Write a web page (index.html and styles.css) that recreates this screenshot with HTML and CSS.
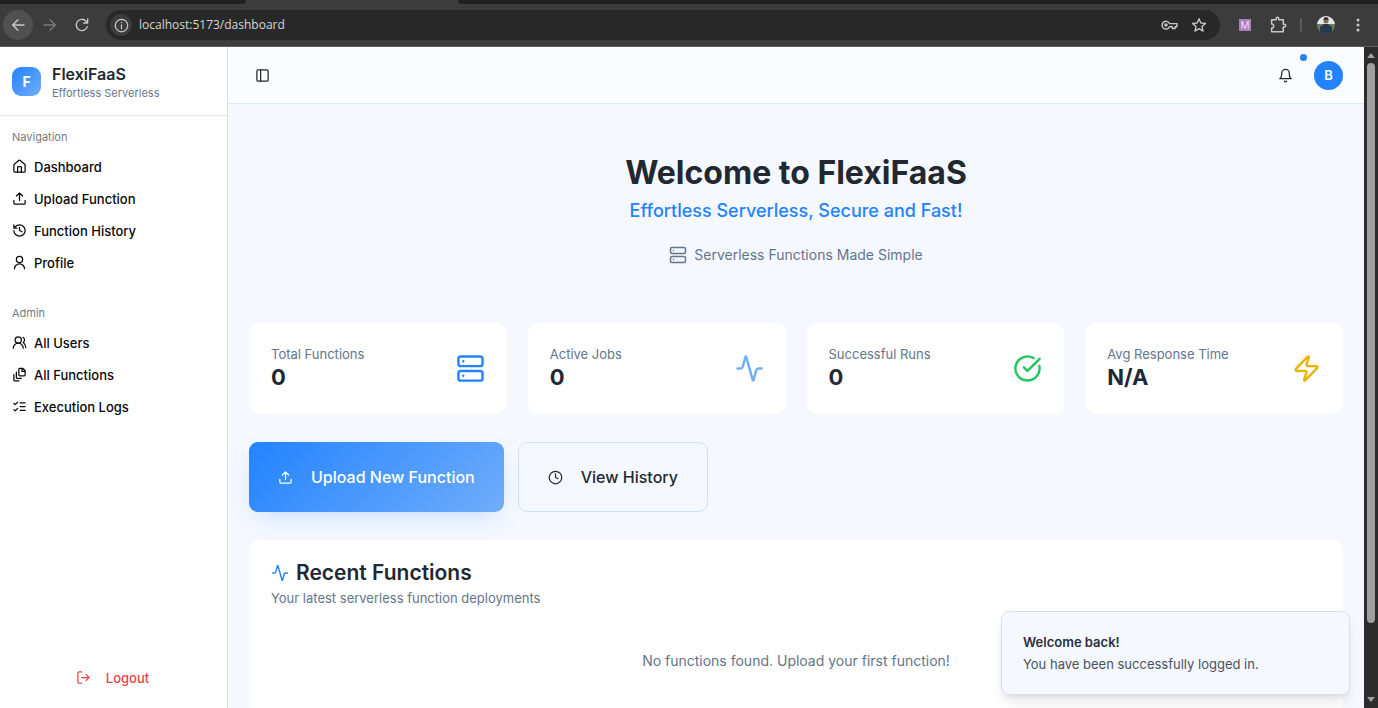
FILE: index.html
```html
<!DOCTYPE html>
<html lang="en">
<head>
<meta charset="utf-8">
<title>FlexiFaaS</title>
<link rel="stylesheet" href="styles.css">
</head>
<body>
<svg class="defs" aria-hidden="true">
  <symbol id="server" viewBox="0 0 24 24"><rect x="2" y="2" width="20" height="8" rx="2"/><rect x="2" y="14" width="20" height="8" rx="2"/><path d="M6 6h.01M6 18h.01"/></symbol>
  <symbol id="upload" viewBox="0 0 24 24"><path d="M21 15v4a2 2 0 0 1-2 2H5a2 2 0 0 1-2-2v-4M17 8l-5-5-5 5M12 3v12"/></symbol>
  <symbol id="activity" viewBox="0 0 24 24"><path d="M22 12h-2.48a2 2 0 0 0-1.93 1.46l-2.35 8.36a.25.25 0 0 1-.48 0L9.24 2.18a.25.25 0 0 0-.48 0l-2.35 8.36A2 2 0 0 1 4.49 12H2"/></symbol>
</svg>
<div class="window">
  <header class="browser">
    <div class="tabstrip"><span class="tab-left"></span><span class="tab-active"></span><span class="tab-rest"></span></div>
    <div class="toolbar">
      <button class="round lit" aria-label="Back"><svg class="icon i16" viewBox="0 0 24 24"><path d="M21 12H4M12 4l-8 8 8 8"/></svg></button>
      <button class="round dim" aria-label="Forward"><svg class="icon i16" viewBox="0 0 24 24"><path d="M3 12h17M12 4l8 8-8 8"/></svg></button>
      <button class="round" aria-label="Reload"><svg class="icon i16" viewBox="0 0 24 24"><path d="M20 14.5A8.500 8.500 0 1 1 18 6l2.500 2.500M20.500 3v6h-6"/></svg></button>
      <div class="address">
        <button class="site" aria-label="Site information"><svg class="icon i14" viewBox="0 0 24 24"><circle cx="12" cy="12" r="10"/><path d="M12 11v6M12 7v.5"/></svg></button>
        <input class="url" aria-label="Address" value="localhost:5173/dashboard">
        <button class="plain" aria-label="Passwords"><svg class="icon key" viewBox="0 0 24 14"><path d="M12 5a5.500 5.500 0 1 0 0 4.500h4V12h4V9.500h2.500V5z"/><circle cx="7" cy="7" r="1.500"/></svg></button>
        <button class="plain" aria-label="Bookmark"><svg class="icon i16" viewBox="0 0 24 24"><path d="m12 2.500 2.700 6.500 7.100.6-5.400 4.700 1.700 6.900-6.100-3.700-6.100 3.700 1.700-6.900L2.200 9.600l7.100-.6z"/></svg></button>
      </div>
      <button class="ext" aria-label="Extension">M</button>
      <button class="plain" aria-label="Extensions"><svg class="icon i18" viewBox="0 0 24 24"><path d="M3.500 5h6V3.500a1.500 1.500 0 0 1 3.500 0V5h6v6h1.500a1.500 1.500 0 0 1 0 3.500H19v6.500H3.500v-5a2.700 2.700 0 0 0 0-5.500z"/></svg></button>
      <span class="divider"></span>
      <button class="plain" aria-label="Account"><svg class="photo" viewBox="0 0 18 18"><clipPath id="round"><circle cx="9" cy="9" r="9"/></clipPath><g clip-path="url(#round)"><path fill="#e3e7ea" d="M0 0h18v9H0z"/><path fill="#6f7d58" d="M0 8h18v10H0z"/><path fill="#26384e" d="M3 18v-7l4-3h4l4 3v7z"/><circle cx="9" cy="5" r="2.500" fill="#8b6858"/><path fill="#202020" d="M6.500 4.500V2.500Q9 0 11.500 2.500v2L11 3.500H7z"/></g></svg></button>
      <button class="plain" aria-label="Menu"><svg class="dots" viewBox="0 0 4 14"><circle cx="2" cy="2" r="1.500"/><circle cx="2" cy="7" r="1.500"/><circle cx="2" cy="12" r="1.500"/></svg></button>
    </div>
  </header>
  <div class="page">
    <aside class="sidebar">
      <div class="brand"><span class="logo">F</span><div><div class="brand-name">FlexiFaaS</div><div class="brand-sub">Effortless Serverless</div></div></div>
      <nav class="group">
        <h2 class="label">Navigation</h2>
        <a class="item" href="#"><svg class="icon i14" viewBox="0 0 24 24"><path d="M15 21v-8a1 1 0 0 0-1-1h-4a1 1 0 0 0-1 1v8"/><path d="M3 10a2 2 0 0 1 .709-1.528l7-5.999a2 2 0 0 1 2.582 0l7 5.999A2 2 0 0 1 21 10v9a2 2 0 0 1-2 2H5a2 2 0 0 1-2-2z"/></svg>Dashboard</a>
        <a class="item" href="#"><svg class="icon i14"><use href="#upload"/></svg>Upload Function</a>
        <a class="item" href="#"><svg class="icon i14" viewBox="0 0 24 24"><path d="M3 12a9 9 0 1 0 9-9 9.750 9.750 0 0 0-6.740 2.740L3 8M3 3v5h5M12 7v5l4 2"/></svg>Function History</a>
        <a class="item" href="#"><svg class="icon i14" viewBox="0 0 24 24"><circle cx="12" cy="7" r="5"/><path d="M20 22a8 8 0 0 0-16 0"/></svg>Profile</a>
      </nav>
      <nav class="group">
        <h2 class="label">Admin</h2>
        <a class="item" href="#"><svg class="icon i14" viewBox="0 0 24 24"><path d="M18 21a8 8 0 0 0-16 0"/><circle cx="10" cy="8" r="5"/><path d="M22 20c0-3.370-2-6.500-4-8a5 5 0 0 0-.450-8.300"/></svg>All Users</a>
        <a class="item" href="#"><svg class="icon i14" viewBox="0 0 24 24"><path d="M16 2v5h5M21 6v6.500c0 .8-.7 1.500-1.500 1.500h-7c-.8 0-1.500-.7-1.500-1.500v-9c0-.8.7-1.500 1.500-1.500H17l4 4zM7 8v8.800c0 .3.2.6.4.8.2.2.5.4.8.4H15M3 12v8.800c0 .3.2.6.4.8.2.2.5.4.8.4H11"/></svg>All Functions</a>
        <a class="item" href="#"><svg class="icon i14" viewBox="0 0 24 24"><path d="m3 17 2 2 4-4M3 7l2 2 4-4M13 6h8M13 12h8M13 18h8"/></svg>Execution Logs</a>
      </nav>
      <button class="logout"><svg class="icon i14" viewBox="0 0 24 24"><path d="M9 21H5a2 2 0 0 1-2-2V5a2 2 0 0 1 2-2h4M16 17l5-5-5-5M21 12H9"/></svg>Logout</button>
    </aside>
    <div class="content">
      <div class="topbar">
        <button class="plain" aria-label="Toggle sidebar"><svg class="icon i14" viewBox="0 0 24 24"><rect x="3" y="3" width="18" height="18" rx="2"/><path d="M9 3v18"/></svg></button>
        <div class="account">
          <button class="bell" aria-label="Notifications"><svg class="icon i14" viewBox="0 0 24 24"><path d="M6 8a6 6 0 0 1 12 0c0 7 3 9 3 9H3s3-2 3-9M10.300 21a1.940 1.940 0 0 0 3.400 0"/></svg><span class="dot"></span></button>
          <button class="avatar" aria-label="Profile menu">B</button>
        </div>
      </div>
      <main class="main">
        <section class="hero">
          <h1 class="title">Welcome to FlexiFaaS</h1>
          <p class="tagline">Effortless Serverless, Secure and Fast!</p>
          <p class="simple"><svg class="icon i18"><use href="#server"/></svg>Serverless Functions Made Simple</p>
        </section>
        <section class="stats">
          <div class="card stat"><div><div class="stat-label">Total Functions</div><div class="stat-value">0</div></div><svg class="icon i28 blue"><use href="#server"/></svg></div>
          <div class="card stat"><div><div class="stat-label">Active Jobs</div><div class="stat-value">0</div></div><svg class="icon i28 sky"><use href="#activity"/></svg></div>
          <div class="card stat"><div><div class="stat-label">Successful Runs</div><div class="stat-value">0</div></div><svg class="icon i28 green" viewBox="0 0 24 24"><path d="M21.801 10A10 10 0 1 1 17 3.335M9 11l3 3L22 4"/></svg></div>
          <div class="card stat"><div><div class="stat-label">Avg Response Time</div><div class="stat-value">N/A</div></div><svg class="icon i28 amber" viewBox="0 0 24 24"><path d="M4 14a1 1 0 0 1-.780-1.630l9.900-10.200a.5.5 0 0 1 .860.460l-1.920 6.020A1 1 0 0 0 13 10h7a1 1 0 0 1 .780 1.630l-9.900 10.200a.5.5 0 0 1-.860-.460l1.920-6.020A1 1 0 0 0 11 14z"/></svg></div>
        </section>
        <section class="actions">
          <button class="action primary"><svg class="icon i14"><use href="#upload"/></svg>Upload New Function</button>
          <button class="action outline"><svg class="icon i14" viewBox="0 0 24 24"><circle cx="12" cy="12" r="10"/><path d="M12 6v6l4 2"/></svg>View History</button>
        </section>
        <section class="card recent">
          <h2 class="recent-title"><svg class="icon i18 blue"><use href="#activity"/></svg>Recent Functions</h2>
          <p class="recent-sub">Your latest serverless function deployments</p>
          <p class="empty">No functions found. Upload your first function!</p>
        </section>
      </main>
    </div>
    <div class="scrollbar"><span class="arrow up"></span><span class="thumb"></span><span class="arrow down"></span></div>
  </div>
  <div class="toast" role="status"><strong class="toast-title">Welcome back!</strong><span>You have been successfully logged in.</span></div>
</div>
</body>
</html>
```
FILE: styles.css
```css
* { box-sizing: border-box; }
body { margin: 0; font-family: Inter, sans-serif; color: #212830; }
h1, h2, p { margin: 0; }
button { border: 0; padding: 0; background: none; color: inherit; font: inherit; display: flex; align-items: center; justify-content: center; }
a { color: inherit; text-decoration: none; }
.defs { position: absolute; width: 0; height: 0; }
.icon { flex: none; fill: none; stroke: currentColor; stroke-width: 2; stroke-linecap: round; stroke-linejoin: round; }
.i14 { width: 15px; height: 15px; }
.i16 { width: 16px; height: 16px; }
.i18 { width: 18px; height: 18px; }
.i28 { width: 29px; height: 29px; }
.blue { color: #2383ff; }
.sky { color: #70adfa; }
.green { color: #22c55e; }
.amber { color: #eab308; }

.window { position: relative; height: 100vh; display: flex; flex-direction: column; overflow: hidden; }

.browser { background: #3c3c3c; border-bottom: 1px solid #5c5f5e; color: #c7c7c7; }
.tabstrip { display: flex; height: 4px; background: #3c3c3c; }
.tab-left { width: 246px; background: #1f2020; border-bottom-right-radius: 4px; }
.tab-active { width: 212px; }
.tab-rest { flex: 1; background: #1f2020; border-bottom-left-radius: 4px; }
.toolbar { display: flex; align-items: center; height: 42px; padding: 0 18px 0 3px; }
.round { width: 30px; height: 30px; border-radius: 50%; margin-right: 2px; }
.lit { background: #505050; }
.dim { color: #7b7b7b; }
.address { flex: 1; display: flex; align-items: center; gap: 13px; height: 30px; margin: 0 19px 0 7px; padding: 0 13px 0 4px; border-radius: 15px; background: #282828; }
.site { width: 22px; height: 22px; border-radius: 50%; background: #3c3c3c; }
.url { flex: 1; min-width: 0; margin-left: -6px; padding: 0; border: 0; outline: 0; background: none; color: #d6d6d6; font: 12px/20px "Open Sans", sans-serif; }
.key { width: 17px; height: 10px; }
.ext { width: 12px; height: 12px; background: #a97fc0; color: #eadff0; font-size: 10px; line-height: 12px; margin-right: 18px; }
.divider { width: 2px; height: 14px; margin: 0 15px 0 13px; background: #5b5b5b; }
.photo { width: 18px; height: 18px; margin-right: 21px; }
.dots { width: 4px; height: 14px; fill: #c7c7c7; }

.page { flex: 1; min-height: 0; display: flex; }
.sidebar { flex: none; width: 228px; display: flex; flex-direction: column; border-right: 1px solid #d7dfed; background: #fff; }
.brand { display: flex; align-items: center; gap: 11px; height: 69px; padding: 0 12px; border-bottom: 1px solid #dfe3ea; }
.logo { display: flex; align-items: center; justify-content: center; width: 29px; height: 29px; border-radius: 9px; background: linear-gradient(135deg, #2383ff, #70adfa); color: #fff; font-size: 14px; font-weight: 700; }
.brand-name { padding-top: 2px; font-size: 16px; line-height: 22px; font-weight: 600; }
.brand-sub { font-size: 11px; line-height: 16px; color: #65758b; }
.group { padding: 7px 7px 6px; margin-bottom: 6px; }
.label { height: 29px; padding: 0 5px; font-size: 11px; line-height: 29px; font-weight: 400; color: #777b81; }
.item { display: flex; align-items: center; gap: 7px; height: 29px; margin-bottom: 3px; padding: 0 5px; color: #09090b; font-size: 13px; font-weight: 500; }
.logout { gap: 15px; margin: auto 0 16px; height: 29px; padding-right: 2px; color: #ef4444; font-size: 13px; font-weight: 500; }

.content { flex: 1; min-width: 0; display: flex; flex-direction: column; background: #f5f8ff; }
.topbar { flex: none; display: flex; align-items: center; justify-content: space-between; height: 57px; padding: 0 21px 0 27px; border-bottom: 1px solid #e2e8f0; background: #fbfcff; }
.account { display: flex; align-items: center; gap: 11px; }
.bell { position: relative; width: 36px; height: 32px; }
.dot { position: absolute; top: -5px; right: -4px; width: 7px; height: 7px; border-radius: 50%; background: #2383ff; }
.avatar { width: 29px; height: 29px; border-radius: 50%; background: #2383ff; color: #fff; font-size: 13px; font-weight: 600; }
.main { flex: 1; min-height: 0; overflow: hidden; padding: 49px 21px 0; display: flex; flex-direction: column; gap: 28px; }
.main > * { flex: none; }
.hero { display: flex; flex-direction: column; align-items: center; height: 142px; }
.title { font-size: 32px; line-height: 39px; font-weight: 700; }
.tagline { margin-top: 6px; font-size: 18px; line-height: 25px; font-weight: 500; color: #2383ff; }
.simple { display: flex; align-items: center; gap: 7px; margin-top: 21px; font-size: 14px; line-height: 22px; color: #65758b; }
.card { border-radius: 11px; background: #fff; }
.stats { display: grid; grid-template-columns: repeat(4, 1fr); gap: 21px; }
.stat { display: flex; align-items: center; justify-content: space-between; height: 91px; padding: 0 22px 1px; }
.stat-label { font-size: 13px; line-height: 18px; font-weight: 400; color: #65758b; }
.stat-value { font-size: 22px; line-height: 28px; font-weight: 700; }
.actions { display: flex; gap: 14px; }
.action { height: 70px; padding: 0 29px; gap: 18px; border-radius: 9px; font-size: 16px; font-weight: 500; }
.primary { background: linear-gradient(135deg, #2383ff, #70adfa); color: #fff; box-shadow: 0 9px 26px -9px #2383ff4d; }
.outline { border: 1px solid #cce3fd; }
.recent { height: 260px; padding: 18px 22px; }
.recent-title { display: flex; align-items: center; gap: 7px; font-size: 21px; line-height: 30px; font-weight: 600; }
.recent-sub { margin-top: 1px; font-size: 13px; line-height: 18px; color: #65758b; }
.empty { margin-top: 43px; text-align: center; font-size: 14px; line-height: 22px; color: #65758b; }

.scrollbar { flex: none; width: 14px; display: flex; flex-direction: column; align-items: center; background: #2c2c2c; padding: 6px 0; }
.arrow { border: 4px solid transparent; }
.up { border-top: 0; border-bottom: 5px solid #9f9f9f; }
.down { border-bottom: 0; border-top: 5px solid #9f9f9f; }
.thumb { flex: 1; width: 8px; margin: 5px 0 74px; border-radius: 4px; background: #9f9f9f; }
.toast { position: absolute; right: 28px; bottom: 13px; width: 349px; height: 84px; display: flex; flex-direction: column; justify-content: center; gap: 4px; padding: 0 21px; border: 1px solid #d5e0ef; border-radius: 8px; background: #f5f8ff; box-shadow: 0 9px 14px -3px #0000001a, 0 4px 6px -4px #0000001a; font-size: 13px; line-height: 18px; color: #4b515c; }
.toast-title { font-weight: 600; color: #2b303b; }
```
